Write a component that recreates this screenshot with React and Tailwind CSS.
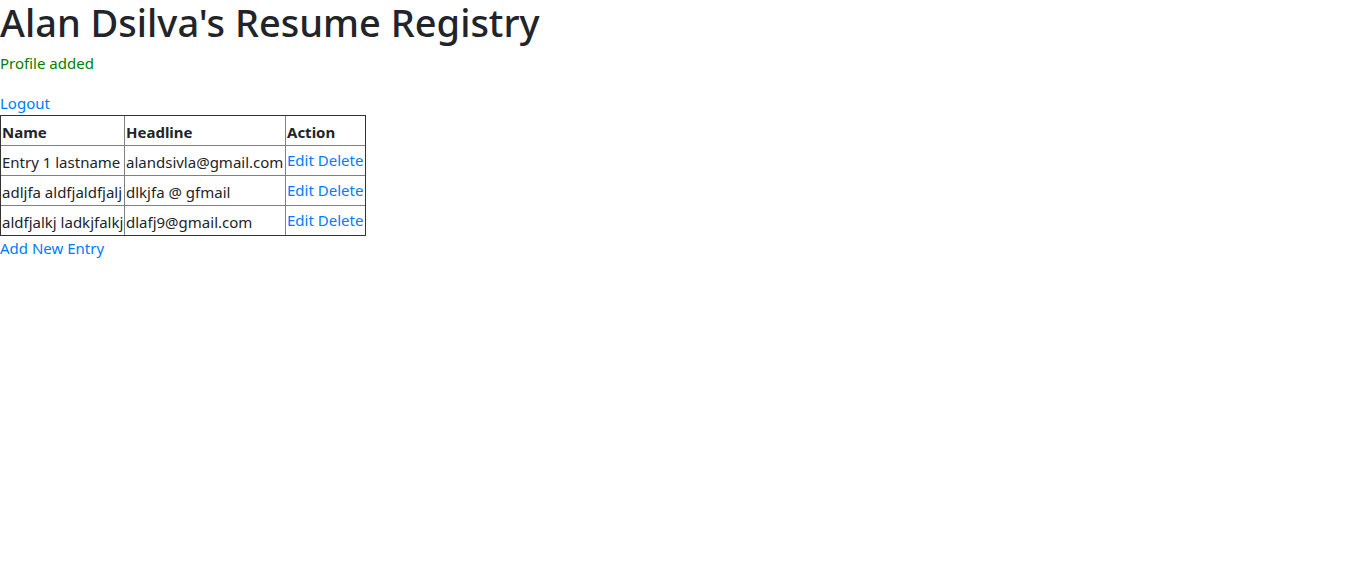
import React from 'react';

const rows = [
  { name: 'Entry 1 lastname', headline: 'alandsivla@gmail.com' },
  { name: 'adljfa aldfjaldfjalj', headline: 'dlkjfa @ gfmail' },
  { name: 'aldfjalkj ladkjfalkj', headline: 'dlafj9@gmail.com' },
];

export default function App() {
  return (
    <div className="min-h-screen bg-white text-[#212529] text-[15px] leading-[24px] font-['Noto_Sans',sans-serif]">
      {/* Title */}
      <h1 className="text-[38px] leading-[44px] font-medium mb-[7px]">Alan Dsilva's Resume Registry</h1>

      {/* Flash message */}
      <p className="text-[#008000] mb-[16px]">Profile added</p>

      <a href="#" className="text-[#007bff] block">Logout</a>

      {/* Registry table */}
      <div className="w-[366px] border border-[#333] grid grid-cols-[124px_161px_79px] whitespace-nowrap">
        <div className="h-[30px] border-r border-b border-[#808080] flex items-center pl-[1px] pt-[2px] font-bold">Name</div>
        <div className="h-[30px] border-r border-b border-[#808080] flex items-center pl-[1px] pt-[2px] font-bold">Headline</div>
        <div className="h-[30px] border-b border-[#808080] flex items-center pl-[1px] pt-[2px] font-bold">Action</div>
        {rows.map((r, i) => {
          const last = i === rows.length - 1;
          return (
            <React.Fragment key={i}>
              <div className={last ? 'h-[29px] border-r border-[#808080] flex items-center pl-[1px] pt-[3px] overflow-hidden' : 'h-[30px] border-r border-b border-[#808080] flex items-center pl-[1px] pt-[3px] overflow-hidden'}>{r.name}</div>
              <div className={last ? 'h-[29px] border-r border-[#808080] flex items-center pl-[1px] pt-[3px] overflow-hidden' : 'h-[30px] border-r border-b border-[#808080] flex items-center pl-[1px] pt-[3px] overflow-hidden'}>{r.headline}</div>
              <div className={last ? 'h-[29px] flex items-center pl-[1px] pb-[1px] overflow-hidden' : 'h-[30px] border-b border-[#808080] flex items-center pl-[1px] pb-[1px] overflow-hidden'}>
                <a href="#" className="text-[#007bff]">Edit</a>&nbsp;<a href="#" className="text-[#007bff]">Delete</a>
              </div>
            </React.Fragment>
          );
        })}
      </div>

      <a href="#" className="text-[#007bff] block">Add New Entry</a>
    </div>
  );
}
